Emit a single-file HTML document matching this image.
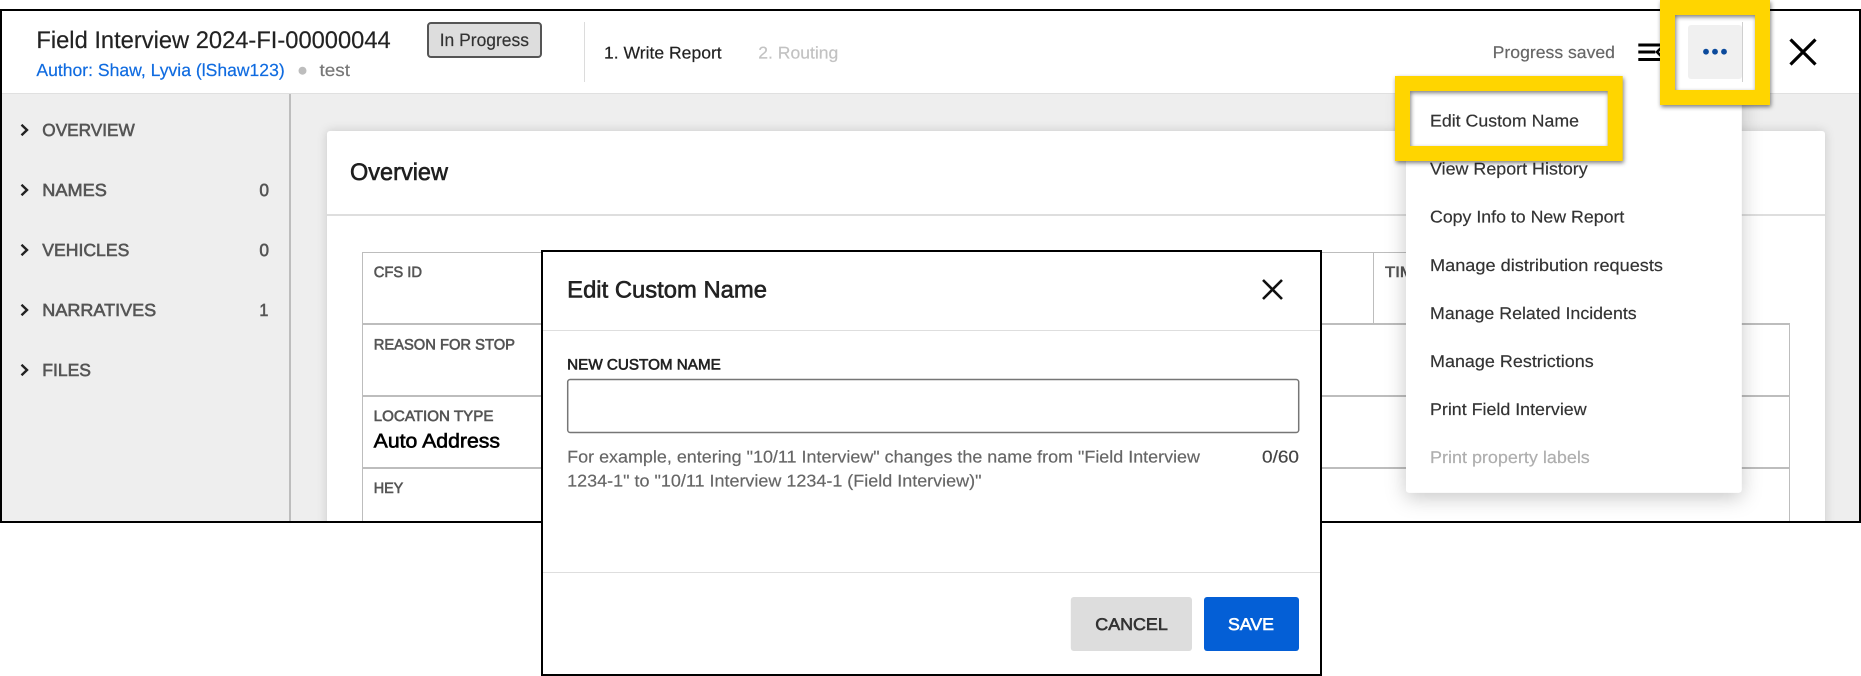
<!DOCTYPE html>
<html lang="en">
<head>
<meta charset="utf-8">
<title>Edit Custom Name</title>
<style>
html,body{margin:0;padding:0;background:#fff;width:1861px;height:676px;overflow:hidden}
svg{display:block;position:absolute;left:0;top:0}
text{font-family:"Liberation Sans",Arial,sans-serif;text-rendering:geometricPrecision}
.r text,text.r{stroke:currentColor;stroke-width:.18px}
.m text,text.m{stroke:currentColor;stroke-width:.6px}
</style>
</head>
<body>
<svg width="1861" height="676" viewBox="0 0 1861 676" xmlns="http://www.w3.org/2000/svg">
<defs>
<clipPath id="frame"><rect x="2" y="11" width="1857" height="510"/></clipPath>
<clipPath id="below"><rect x="2" y="94" width="1857" height="427"/></clipPath>
</defs>
<rect width="1861" height="676" fill="#fff"/>

<g clip-path="url(#frame)">
  <!-- main background -->
  <rect x="2" y="93" width="1857" height="430" fill="#eeeeee"/>
  <rect x="289" y="93" width="2" height="430" fill="#bdbdbd"/>

  <!-- card -->
  <rect x="327" y="131" width="1498" height="400" rx="3" fill="#fff" style="filter:drop-shadow(0 0 5px rgba(0,0,0,.16))"/>
  <rect x="327" y="214" width="1498" height="2" fill="#dedede"/>
  <text x="350" y="180" font-size="24" fill="#1e1e1e" class="m" style="color:#1e1e1e" textLength="98" lengthAdjust="spacingAndGlyphs">Overview</text>

  <!-- table -->
  <g fill="#bdbdbd">
    <rect x="362" y="252" width="1044" height="1"/>
    <rect x="362" y="252" width="1" height="272"/>
    <rect x="1373" y="252" width="1" height="72"/>
    <rect x="362" y="323" width="1428" height="2"/>
    <rect x="362" y="395" width="1428" height="2"/>
    <rect x="362" y="467" width="1428" height="2"/>
    <rect x="1789" y="323" width="1" height="200"/>
  </g>
  <g font-size="15" fill="#555" class="m" style="color:#555">
    <text x="373.7" y="277" textLength="48.3" lengthAdjust="spacingAndGlyphs">CFS ID</text>
    <text x="1385" y="277" textLength="40" lengthAdjust="spacingAndGlyphs">TIME</text>
    <text x="373.7" y="349.3" textLength="141.3" lengthAdjust="spacingAndGlyphs">REASON FOR STOP</text>
    <text x="373.7" y="421" textLength="119.8" lengthAdjust="spacingAndGlyphs">LOCATION TYPE</text>
    <text x="373.7" y="493" textLength="29.6" lengthAdjust="spacingAndGlyphs">HEY</text>
  </g>
  <text x="373.7" y="447.7" font-size="20" fill="#000" class="m" style="color:#000" textLength="126.3" lengthAdjust="spacingAndGlyphs">Auto Address</text>

  <!-- sidebar -->
  <g fill="none" stroke="#222" stroke-width="2.4">
    <path d="M21.5 124.8L27 130L21.5 135.2"/>
    <path d="M21.5 184.8L27 190L21.5 195.2"/>
    <path d="M21.5 244.8L27 250L21.5 255.2"/>
    <path d="M21.5 304.8L27 310L21.5 315.2"/>
    <path d="M21.5 364.8L27 370L21.5 375.2"/>
  </g>
  <g font-size="17.5" fill="#555" class="m" style="color:#555">
    <text x="42.3" y="136" textLength="92.5" lengthAdjust="spacingAndGlyphs">OVERVIEW</text>
    <text x="42.3" y="196" textLength="64.5" lengthAdjust="spacingAndGlyphs">NAMES</text>
    <text x="42.3" y="256" textLength="87" lengthAdjust="spacingAndGlyphs">VEHICLES</text>
    <text x="42.3" y="316" textLength="113.9" lengthAdjust="spacingAndGlyphs">NARRATIVES</text>
    <text x="42.3" y="376" textLength="48.7" lengthAdjust="spacingAndGlyphs">FILES</text>
    <text x="259.4" y="196" textLength="9.6" lengthAdjust="spacingAndGlyphs">0</text>
    <text x="259.4" y="256" textLength="9.6" lengthAdjust="spacingAndGlyphs">0</text>
    <text x="259.4" y="316" textLength="9" lengthAdjust="spacingAndGlyphs">1</text>
  </g>

  <!-- header -->
  <rect x="2" y="11" width="1857" height="82" fill="#fff"/>
  <rect x="2" y="93" width="1857" height="1" fill="#e0e0e0"/>
  <text x="36.4" y="48" font-size="24" fill="#222" class="r" style="color:#222" textLength="354.3" lengthAdjust="spacingAndGlyphs">Field Interview 2024-FI-00000044</text>
  <text x="36.4" y="76" font-size="17.5" fill="#0f6be0" class="r" style="color:#0f6be0" textLength="248.3" lengthAdjust="spacingAndGlyphs">Author: Shaw, Lyvia (lShaw123)</text>
  <circle cx="302.5" cy="70.7" r="4" fill="#bdbdbd"/>
  <text x="319.5" y="76" font-size="17.5" fill="#777" class="r" style="color:#777" textLength="30.5" lengthAdjust="spacingAndGlyphs">test</text>
  <rect x="428" y="23" width="113" height="34" rx="3" fill="#dddddd" stroke="#555" stroke-width="2"/>
  <text x="439.7" y="46" font-size="18" fill="#333" class="r" style="color:#333" textLength="89.3" lengthAdjust="spacingAndGlyphs">In Progress</text>
  <rect x="584" y="22" width="1" height="60" fill="#dcdcdc"/>
  <text x="604" y="58.3" font-size="17" fill="#222" class="r" style="color:#222" textLength="117.7" lengthAdjust="spacingAndGlyphs">1. Write Report</text>
  <text x="758.3" y="58.3" font-size="17" fill="#c2c2c2" class="r" style="color:#c2c2c2" textLength="80" lengthAdjust="spacingAndGlyphs">2. Routing</text>
  <text x="1492.7" y="58" font-size="17" fill="#666" class="r" style="color:#666" textLength="122.3" lengthAdjust="spacingAndGlyphs">Progress saved</text>
  <g fill="#000">
    <rect x="1638.3" y="43.5" width="24" height="3"/>
    <rect x="1638.3" y="50.5" width="17" height="3"/>
    <rect x="1638.3" y="58" width="24" height="3"/>
  </g>
  <path d="M1662 47L1657 52L1662 57" fill="none" stroke="#000" stroke-width="2.6"/>
  <rect x="1688" y="25" width="54" height="54" rx="3" fill="#f0f0f0"/>
  <rect x="1742" y="22" width="1" height="60" fill="#cfcfcf"/>
  <circle cx="1706" cy="51.7" r="2.9" fill="#0b4a9c"/>
  <circle cx="1715" cy="51.7" r="2.9" fill="#0b4a9c"/>
  <circle cx="1724" cy="51.7" r="2.9" fill="#0b4a9c"/>
  <path d="M1790.5 39.5L1815.5 64.5M1815.5 39.5L1790.5 64.5" fill="none" stroke="#000" stroke-width="3.2"/>
</g>

<!-- overflow menu -->
<g clip-path="url(#below)">
  <rect x="1406" y="82" width="335.7" height="410.7" rx="3" fill="#fff" style="filter:drop-shadow(0 5px 10px rgba(0,0,0,.22))"/>
</g>
<rect x="1406" y="82" width="335.7" height="410.7" rx="3" fill="#fff"/>
<g font-size="17" fill="#333" class="r" style="color:#333">
  <text x="1430" y="126.7" textLength="149" lengthAdjust="spacingAndGlyphs">Edit Custom Name</text>
  <text x="1430" y="174.7" textLength="157.7" lengthAdjust="spacingAndGlyphs">View Report History</text>
  <text x="1430" y="222.7" textLength="194.3" lengthAdjust="spacingAndGlyphs">Copy Info to New Report</text>
  <text x="1430" y="271" textLength="233" lengthAdjust="spacingAndGlyphs">Manage distribution requests</text>
  <text x="1430" y="319" textLength="206.7" lengthAdjust="spacingAndGlyphs">Manage Related Incidents</text>
  <text x="1430" y="367" textLength="163.7" lengthAdjust="spacingAndGlyphs">Manage Restrictions</text>
  <text x="1430" y="415" textLength="156.6" lengthAdjust="spacingAndGlyphs">Print Field Interview</text>
  <text x="1430" y="463" fill="#aeaeae" style="color:#aeaeae" textLength="159.8" lengthAdjust="spacingAndGlyphs">Print property labels</text>
</g>

<!-- outer frame -->
<rect x="1" y="10" width="1859" height="512" fill="none" stroke="#000" stroke-width="2"/>

<!-- yellow callouts -->
<g style="filter:drop-shadow(1.5px 2px 2px rgba(0,0,0,.5))">
  <rect x="1667.5" y="7.5" width="95" height="90" fill="none" stroke="#ffd500" stroke-width="15"/>
</g>
<g style="filter:drop-shadow(1.5px 2px 2px rgba(0,0,0,.5))">
  <rect x="1402.5" y="83.5" width="212.7" height="70" fill="none" stroke="#ffd500" stroke-width="15"/>
</g>

<!-- modal -->
<rect x="542" y="251" width="779" height="424" fill="#fff" stroke="#000" stroke-width="2"/>
<text x="567.2" y="297.3" font-size="23.5" fill="#222" class="m" style="color:#222" textLength="199.8" lengthAdjust="spacingAndGlyphs">Edit Custom Name</text>
<path d="M1263 280L1282 299M1282 280L1263 299" fill="none" stroke="#111" stroke-width="2.6"/>
<rect x="543" y="330" width="777" height="1" fill="#dedede"/>
<text x="567.2" y="369.3" font-size="15" fill="#222" class="m" style="color:#222" textLength="153.6" lengthAdjust="spacingAndGlyphs">NEW CUSTOM NAME</text>
<rect x="567.7" y="379.5" width="731" height="53" rx="2.5" fill="#fff" stroke="#767676" stroke-width="1.5"/>
<g font-size="17" fill="#666" class="r" style="color:#666">
  <text x="567.2" y="462.7" textLength="632.8" lengthAdjust="spacingAndGlyphs">For example, entering "10/11 Interview" changes the name from "Field Interview</text>
  <text x="567.2" y="486.7" textLength="414.3" lengthAdjust="spacingAndGlyphs">1234-1" to "10/11 Interview 1234-1 (Field Interview)"</text>
  <text x="1262" y="462.7" fill="#444" style="color:#444" textLength="37" lengthAdjust="spacingAndGlyphs">0/60</text>
</g>
<rect x="543" y="572" width="777" height="1" fill="#dedede"/>
<rect x="1070.8" y="597" width="121.2" height="54" rx="3" fill="#dddddd"/>
<text x="1095.3" y="630" font-size="17" fill="#333" class="m" style="color:#333" textLength="72.5" lengthAdjust="spacingAndGlyphs">CANCEL</text>
<rect x="1204" y="597" width="95" height="54" rx="3" fill="#045fd6"/>
<text x="1228" y="630" font-size="17" fill="#fff" class="m" style="color:#fff" textLength="46" lengthAdjust="spacingAndGlyphs">SAVE</text>
</svg>
</body>
</html>
